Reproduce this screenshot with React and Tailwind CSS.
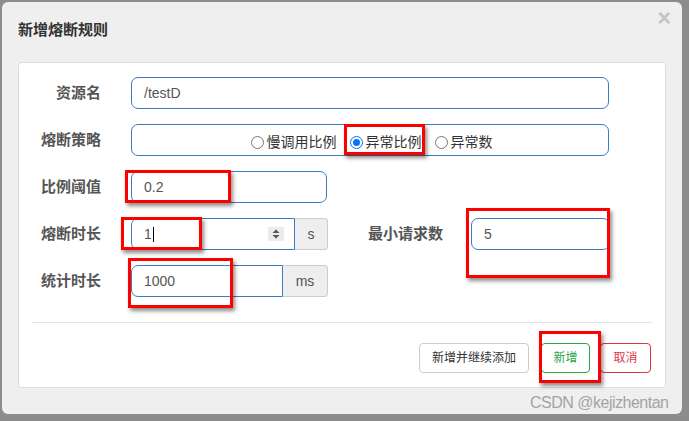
import React from 'react';

const font = { fontFamily: '"Liberation Sans", "Noto Sans CJK SC", sans-serif' };

// 标注用的红框
const Mark = ({ className }) => (
  <div
    className={`absolute border-[3px] border-[#f00] shadow-[2px_3px_4px_rgba(0,0,0,0.45)] ${className}`}
  />
);

const Label = ({ children, className = '' }) => (
  <div className={`w-[82px] shrink-0 text-right text-[15px] font-bold text-[#555] ${className}`}>
    {children}
  </div>
);

const Radio = ({ checked, children }) => (
  <label className="flex items-center gap-[3px]">
    <span
      className={`flex h-[13px] w-[13px] items-center justify-center rounded-full border ${
        checked ? 'border-[#0075ff]' : 'border-[#767676]'
      } bg-white`}
    >
      {checked && <span className="h-[7px] w-[7px] rounded-full bg-[#0075ff]" />}
    </span>
    <span>{children}</span>
  </label>
);

const Spinner = () => (
  <svg width="16" height="14" viewBox="0 0 16 14">
    <rect width="16" height="14" fill="#ececec" />
    <path d="M4.5 6 L8 2.5 L11.5 6 Z" fill="#555" />
    <path d="M4.5 8 L8 11.5 L11.5 8 Z" fill="#555" />
  </svg>
);

export default function App() {
  const input =
    'h-[32px] border border-[#3b7cc0] bg-white px-[12px] flex items-center text-[14px] text-[#555]';

  return (
    <div className="relative h-[421px] w-[689px] overflow-hidden bg-[#8c8c8c] p-[2px]" style={font}>
      <div className="relative flex h-[412px] w-[680px] flex-col rounded-[6px] bg-[#efefef] px-[16px]">
        {/* 标题 */}
        <div className="flex h-[60px] items-start justify-between">
          <h4 className="pt-[18px] text-[15px] font-bold leading-[20px] text-[#333]">新增熔断规则</h4>
          <button className="-mr-[5px] mt-[5px] text-[23px] font-bold leading-[23px] text-[#c4c4c4]">×</button>
        </div>

        {/* 表单面板 */}
        <div className="flex h-[326px] flex-col rounded-[4px] border border-[#ddd] bg-white pt-[14px]">
          <div className="flex flex-col gap-[15px]">
            {/* 资源名 */}
            <div className="flex h-[32px] items-center">
              <Label>资源名</Label>
              <div className={`ml-[30px] w-[478px] rounded-[7px] ${input}`}>/testD</div>
            </div>

            {/* 熔断策略 */}
            <div className="flex h-[32px] items-center">
              <Label>熔断策略</Label>
              <div className="ml-[30px] flex h-[32px] w-[478px] items-center justify-center gap-[13px] rounded-[7px] border border-[#3b7cc0] pl-[3px] pt-[4px] text-[14px] text-[#333]">
                <Radio>慢调用比例</Radio>
                <Radio checked>异常比例</Radio>
                <Radio>异常数</Radio>
              </div>
            </div>

            {/* 比例阈值 */}
            <div className="flex h-[32px] items-center">
              <Label>比例阈值</Label>
              <div className={`ml-[30px] w-[196px] rounded-[7px] ${input}`}>0.2</div>
            </div>

            {/* 熔断时长 + 最小请求数 */}
            <div className="flex h-[32px] items-center">
              <Label>熔断时长</Label>
              <div className="ml-[30px] flex">
                <div className={`w-[164px] justify-between rounded-l-[7px] pr-[10px] ${input}`}>
                  <span className="flex items-center">
                    1<span className="ml-px h-[15px] w-px bg-black" />
                  </span>
                  <Spinner />
                </div>
                <div className="flex h-[32px] w-[33px] items-center justify-center rounded-r-[4px] border border-l-0 border-[#ccc] bg-[#eee] text-[14px] text-[#555]">
                  s
                </div>
              </div>
              <Label className="ml-[33px]">最小请求数</Label>
              <div className={`ml-[28px] w-[139px] rounded-[7px] ${input}`}>5</div>
            </div>

            {/* 统计时长 */}
            <div className="flex h-[32px] items-center">
              <Label>统计时长</Label>
              <div className="ml-[30px] flex">
                <div className={`w-[152px] rounded-l-[7px] ${input}`}>1000</div>
                <div className="flex h-[32px] w-[45px] items-center justify-center rounded-r-[4px] border border-l-0 border-[#ccc] bg-[#eee] text-[14px] text-[#555]">
                  ms
                </div>
              </div>
            </div>
          </div>

          <div className="mx-[13px] mt-[25px] h-px bg-[#e5e5e5]" />

          {/* 按钮 */}
          <div className="mt-[20px] flex justify-end pr-[14px] text-[12px]">
            <button className="h-[30px] w-[110px] rounded-[4px] border border-[#ccc] bg-white text-[#333]">
              新增并继续添加
            </button>
            <button className="ml-[12px] h-[30px] w-[49px] rounded-[4px] border border-[#28a745] bg-white text-[#28a745]">
              新增
            </button>
            <button className="ml-[10px] h-[30px] w-[51px] rounded-[4px] border border-[#dc3545] bg-white text-[#dc3545]">
              取消
            </button>
          </div>
        </div>
      </div>

      {/* 红框标注 */}
      <Mark className="left-[344px] top-[124px] h-[31px] w-[81px]" />
      <Mark className="left-[125px] top-[170px] h-[33px] w-[106px]" />
      <Mark className="left-[121px] top-[217px] h-[33px] w-[81px]" />
      <Mark className="left-[128px] top-[258px] h-[50px] w-[105px]" />
      <Mark className="left-[466px] top-[208px] h-[70px] w-[144px]" />
      <Mark className="left-[539px] top-[331px] h-[52px] w-[62px]" />

      {/* 水印 */}
      <div className="absolute left-[530px] top-[391px] text-[16px] tracking-[-0.5px] text-[#a3a3a3]">
        CSDN @kejizhentan
      </div>
    </div>
  );
}
